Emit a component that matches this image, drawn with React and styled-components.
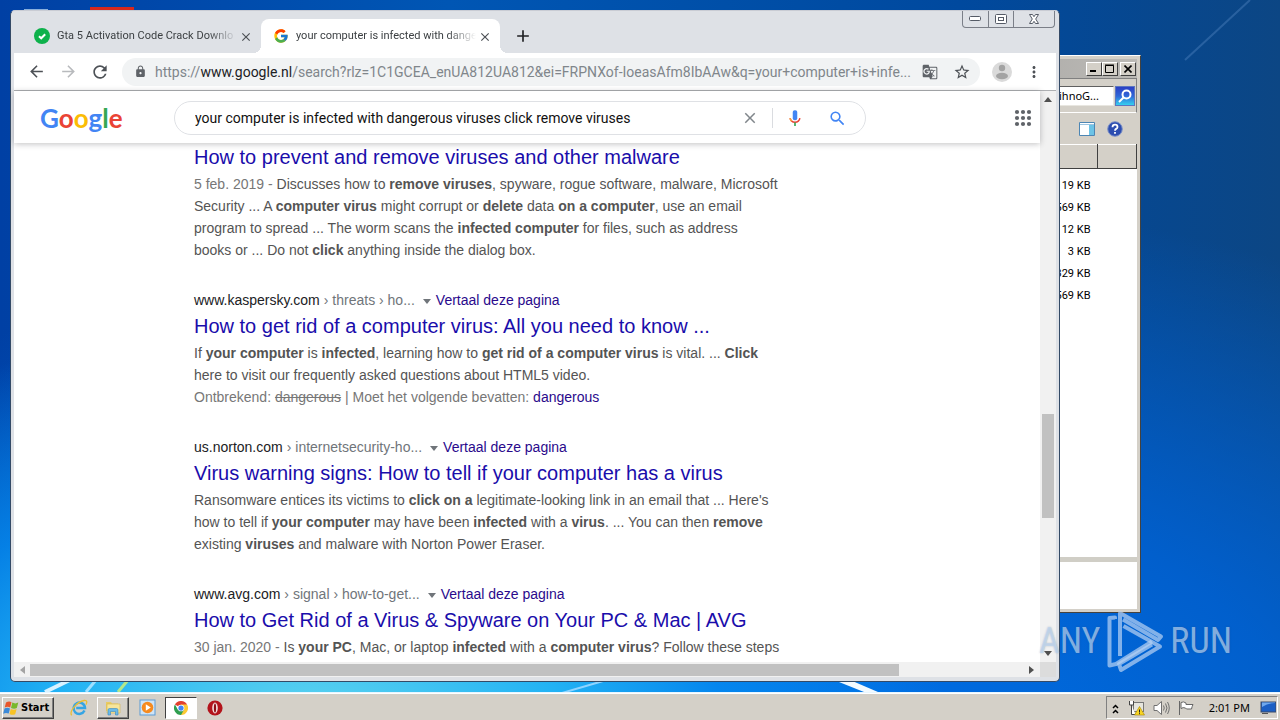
import React from "react";
import styled, { createGlobalStyle } from "styled-components";
import { FcGoogle } from "react-icons/fc";
import {
  MdArrowBack,
  MdArrowForward,
  MdClose,
  MdAdd,
  MdGTranslate,
  MdLock,
  MdMoreVert,
  MdRefresh,
  MdSearch,
  MdStarBorder,
} from "react-icons/md";

const uiFont = `Roboto, "Noto Sans", sans-serif`;
const classicFont = `"Noto Sans", "DejaVu Sans", sans-serif`;
const pageFont = `"Liberation Sans", Arial, sans-serif`;

const GlobalStyle = createGlobalStyle`
  * { box-sizing: border-box; }
  body { margin: 0; font-family: ${uiFont}; }
  button { padding: 0; border: 0; background: none; font: inherit; color: inherit; cursor: pointer; }
  input { padding: 0; border: 0; background: none; outline: 0; min-width: 0; }
  svg { display: block; flex: none; }
`;

/* ---------- desktop ---------- */

const Desktop = styled.div`
  position: relative;
  display: flex;
  flex-direction: column;
  height: 100vh;
  min-height: 480px;
  overflow: hidden;
  background: #0050b4;
`;

const Workspace = styled.main`
  position: relative;
  flex: 1;
  background:
    radial-gradient(ellipse 640px 420px at 24% 106%, #62d6ee 0%, #22b2f4 40%, rgba(6, 140, 240, 0.8) 65%, rgba(0, 110, 225, 0) 100%),
    radial-gradient(ellipse 1100px 560px at 58% 108%, #0072ea 0%, rgba(0, 98, 212, 0.9) 50%, rgba(0, 80, 180, 0) 100%),
    linear-gradient(90deg, #0040a4 0%, #0056b4 35%, #00499e 75%, #0c4684 100%);
`;

const Wallpaper = styled.svg`
  position: absolute;
  inset: 0;
  width: 100%;
  height: 100%;
`;

/* ---------- file explorer window ---------- */

const Explorer = styled.section`
  position: absolute;
  top: 55px;
  right: 139px;
  bottom: 79px;
  width: 520px;
  display: flex;
  flex-direction: column;
  padding: 3px;
  border: 1px solid;
  border-color: #fff #45423e #45423e #fff;
  background: #d4d0c8;
  font-size: 11px;
  color: #000;
`;

const ExplorerTitle = styled.header`
  display: flex;
  justify-content: flex-end;
  align-items: center;
  height: 19px;
  padding-right: 1px;
  background: linear-gradient(90deg, #808080, #bcbab6);
`;

const ClassicButton = styled.button`
  display: grid;
  place-items: center;
  width: 16px;
  height: 14px;
  margin-left: ${(p) => (p.$apart ? "2px" : "0")};
  background: #d4d0c8;
  border: 1px solid;
  border-color: #fff #404040 #404040 #fff;
`;

const ExplorerAddress = styled.div`
  display: flex;
  align-items: center;
  justify-content: flex-end;
  height: 35px;
  border: 1px solid #808080;
  border-width: 1px 1px 0 0;
  border-bottom: 1px solid #fff;
`;

const ExplorerSearch = styled.input`
  width: 74px;
  height: 20px;
  background: #fff;
  border: 1px solid;
  border-color: #606060 #e8e6e0 #e8e6e0 #606060;
  padding-left: 18px;
  font: 11px ${classicFont};
`;

const FindButton = styled.button`
  display: grid;
  place-items: center;
  width: 20px;
  height: 20px;
  margin: 0 1px;
  border: 1px solid #5b76c0;
  background: linear-gradient(180deg, #2b3fc4, #2f66d8 50%, #35d0f0);
`;

const ExplorerTools = styled.div`
  display: flex;
  align-items: center;
  justify-content: flex-end;
  gap: 12px;
  height: 31px;
  padding-right: 14px;
`;

const FileList = styled.div`
  flex: 1;
  background: #fff;
`;

const FileTable = styled.table`
  width: 100%;
  border-collapse: collapse;
  table-layout: fixed;
  th {
    height: 24px;
    background: #d4d0c8;
    border: 1px solid;
    border-color: #fff #404040 #404040 #fff;
  }
  td {
    height: 22px;
    padding: 0 7px 0 0;
    text-align: right;
  }
  tbody::before {
    content: "";
    display: block;
    height: 5px;
  }
`;

const SizeColumn = styled.col`
  width: ${(p) => p.$width};
`;

const DetailsPane = styled.footer`
  height: 52px;
  border-top: 5px solid #d0cec6;
  background: #fff;
`;

/* ---------- browser window ---------- */

const Browser = styled.section`
  position: absolute;
  top: 10px;
  right: 220px;
  bottom: 10px;
  left: 10px;
  display: flex;
  flex-direction: column;
  padding: 0 3px 4px;
  border: 1px solid #344a66;
  border-top-color: #c9ccd4;
  border-radius: 5px;
  background: #dee1e6;
  overflow: hidden;
`;

const TabStrip = styled.div`
  display: flex;
  align-items: flex-end;
  height: 42px;
  padding-left: 8px;
`;

const Tab = styled.div`
  position: relative;
  display: flex;
  align-items: center;
  width: 239px;
  height: 34px;
  padding: 0 10px 0 12px;
  border-radius: 8px 8px 0 0;
  background: ${(p) => (p.$active ? "#fff" : "transparent")};
  &::before,
  &::after {
    content: "";
    display: ${(p) => (p.$active ? "block" : "none")};
    position: absolute;
    bottom: 0;
    width: 8px;
    height: 8px;
  }
  &::before {
    left: -8px;
    background: radial-gradient(circle at 0 0, transparent 8px, #fff 8px);
  }
  &::after {
    right: -8px;
    background: radial-gradient(circle at 100% 0, transparent 8px, #fff 8px);
  }
`;

const TabTitle = styled.span`
  flex: 1;
  margin: 0 2px 0 7px;
  overflow: hidden;
  white-space: nowrap;
  font-size: 11px;
  line-height: 16px;
  color: #3c4043;
  mask-image: linear-gradient(90deg, #000 84%, transparent);
`;

const IconButton = styled.button`
  display: grid;
  place-items: center;
  width: ${(p) => p.$size}px;
  height: ${(p) => p.$size}px;
  color: ${(p) => p.$color || "#4d5156"};
`;

const NewTab = styled(IconButton)`
  margin: 0 0 2px 8px;
`;

const CaptionButtons = styled.div`
  display: flex;
  align-self: flex-start;
  margin-left: auto;
  margin-right: 1px;
  border: 1px solid #7b7f88;
  border-top: 0;
  border-radius: 0 0 4px 4px;
`;

const CaptionButton = styled.button`
  display: grid;
  place-items: center;
  width: ${(p) => (p.$wide ? 41 : 25)}px;
  height: 16px;
  & + & {
    border-left: 1px solid #7b7f88;
  }
`;

const Toolbar = styled.div`
  display: flex;
  align-items: center;
  height: 38px;
  padding: 0 6px;
  background: #fff;
  border-bottom: 1px solid #aeb0b3;
`;

const AddressBar = styled.label`
  display: flex;
  align-items: center;
  flex: 1;
  min-width: 0;
  height: 28px;
  margin: 0 6px;
  padding: 0 2px 0 12px;
  border-radius: 14px;
  background: #f1f3f4;
  font: 14px ${uiFont};
  color: #80868b;
`;

const Scheme = styled.span`
  margin-left: 8px;
`;

const Host = styled.span`
  color: #202124;
`;

const AddressInput = styled.input`
  flex: 1;
  font: inherit;
  color: inherit;
  text-overflow: ellipsis;
`;

const Viewport = styled.div`
  display: flex;
  flex: 1;
  min-height: 0;
`;

const Page = styled.div`
  display: flex;
  flex-direction: column;
  flex: 1;
  min-width: 0;
  background: #fff;
  font-family: ${pageFont};
`;

const PageHeader = styled.header`
  position: relative;
  z-index: 1;
  display: flex;
  align-items: center;
  flex: none;
  height: 52px;
  padding: 2px 8px 0 26px;
  background: #fff;
  box-shadow: 0 1px 6px rgba(32, 33, 36, 0.28);
`;

const GoogleLogo = styled.a`
  width: 134px;
  font-family: Lato, sans-serif;
  font-size: 26px;
  line-height: 34px;
  font-weight: 700;
  text-decoration: none;
`;

const LogoLetter = styled.span`
  color: ${(p) => p.$color};
`;

const SearchBox = styled.form`
  display: flex;
  align-items: center;
  flex: 0 1 692px;
  height: 34px;
  padding: 0 12px 0 20px;
  border: 1px solid #dfe1e5;
  border-radius: 17px;
`;

const SearchInput = styled.input`
  flex: 1;
  font: 14px ${uiFont};
  color: #111;
`;

const Divider = styled.span`
  width: 1px;
  height: 20px;
  margin: 0 6px;
  background: #dadce0;
`;

const AppsButton = styled(IconButton)`
  margin-left: auto;
`;

const Results = styled.div`
  flex: 1;
  min-height: 0;
  padding-left: 180px;
  overflow: hidden;
`;

const ResultList = styled.div`
  display: flex;
  flex-direction: column;
  gap: 29px;
  max-width: 620px;
  margin-top: -2px;
`;

const Result = styled.article`
  white-space: nowrap;
`;

const Source = styled.div`
  display: flex;
  align-items: center;
  font-size: 14px;
  line-height: 20px;
  color: #70757a;
`;

const Domain = styled.cite`
  margin-right: 4px;
  font-style: normal;
  color: #202124;
`;

const MoreArrow = styled.button`
  margin: 2px 5px 0 8px;
  border: 4px solid transparent;
  border-top: 5px solid #70757a;
  border-bottom: 0;
`;

const VisitedLink = styled.a`
  color: #2a0a8c;
  text-decoration: none;
`;

const ResultTitle = styled.h3`
  margin: 0;
  font-size: 20px;
  line-height: 32px;
  font-weight: 400;
`;

const TitleLink = styled.a`
  color: #1a0dab;
  text-decoration: none;
`;

const Snippet = styled.p`
  margin: 0;
  font-size: 14px;
  line-height: 22px;
  color: #545454;
`;

const Muted = styled.span`
  color: #777;
`;

/* ---------- scroll bars ---------- */

const VerticalScroll = styled.div`
  display: flex;
  flex-direction: column;
  align-items: center;
  width: 16px;
  padding: 6px 0;
  background: #f1f1f1;
`;

const VerticalThumb = styled.div`
  width: 12px;
  height: 104px;
  background: #c1c1c1;
`;

const HorizontalScroll = styled.div`
  display: flex;
  align-items: center;
  height: 15px;
  padding: 0 6px;
  background: #f1f1f1;
  border-right: 16px solid #dcdcdc;
`;

const HorizontalThumb = styled.div`
  flex: 0 1 869px;
  height: 12px;
  background: #c1c1c1;
`;

const Spacer = styled.div`
  flex: ${(p) => p.$grow};
`;

const ScrollArrow = styled.button`
  width: 0;
  height: 0;
  border: 4px solid transparent;
  ${(p) => (p.$side === "up" || p.$side === "down" ? "border-top-width: 0; border-bottom-width: 0;" : "border-left-width: 0; border-right-width: 0;")}
  ${(p) => p.$side === "up" && "border-bottom: 5px solid #505050;"}
  ${(p) => p.$side === "down" && "border-top: 5px solid #505050;"}
  ${(p) => p.$side === "left" && "border-right: 5px solid #a3a3a3; margin-right: 5px;"}
  ${(p) => p.$side === "right" && "border-left: 5px solid #505050;"}
`;

/* ---------- task bar ---------- */

const Taskbar = styled.nav`
  position: relative;
  display: flex;
  align-items: center;
  height: 28px;
  padding: 2px 2px 0;
  background: #d4d0c8;
  border-top: 1px solid #e8f6ff;
  box-shadow: inset 0 1px 0 #fff;
`;

const StartButton = styled.button`
  display: flex;
  align-items: center;
  gap: 1px;
  width: 52px;
  height: 22px;
  margin-right: 9px;
  border: 1px solid;
  border-color: #fff #404040 #404040 #fff;
  box-shadow: inset -1px -1px 0 #808080;
  font: bold 11px "DejaVu Sans Condensed", ${classicFont};
  color: #000;
`;

const taskLook = {
  flat: "border-color: transparent;",
  open: "border-color: #fff #404040 #404040 #fff; box-shadow: inset -1px -1px 0 #808080;",
  pressed: "border-color: #404040 #fff #fff #404040; background: #fff;",
};

const TaskButton = styled.button`
  display: grid;
  place-items: center;
  width: 32px;
  height: 22px;
  margin-right: 2px;
  border: 1px solid;
  ${(p) => taskLook[p.$look]}
`;

const Tray = styled.div`
  display: flex;
  align-items: center;
  gap: 8px;
  height: 23px;
  margin-left: auto;
  padding: 0 1px 0 5px;
  border: 1px solid;
  border-color: #808080 #fff #fff #808080;
  font: 11px ${classicFont};
  color: #000;
`;

const Clock = styled.time`
  margin: 0 2px 0 7px;
`;

/* ---------- watermark ---------- */

const Watermark = styled.div`
  position: absolute;
  right: 48px;
  bottom: 47px;
  display: flex;
  align-items: center;
  gap: 6px;
  font: 36px "Liberation Sans Narrow", "Roboto Condensed", Roboto, sans-serif;
  line-height: 64px;
  color: rgba(190, 216, 244, 0.68);
  text-shadow: 0 0 2px rgba(60, 80, 110, 0.3);
  pointer-events: none;
`;

/* ---------- drawings ---------- */

const CheckBadge = () => (
  <svg width="16" height="16" viewBox="0 0 16 16">
    <circle cx="8" cy="8" r="8" fill="#0db14b" />
    <path d="M5 8.2 7.2 10.3 11.2 6.2" fill="none" stroke="#fff" strokeWidth="2" />
  </svg>
);

const Avatar = () => (
  <svg width="20" height="20" viewBox="0 0 20 20">
    <circle cx="10" cy="10" r="10" fill="#dadada" />
    <circle cx="10" cy="6" r="3.2" fill="#a3a3a3" />
    <ellipse cx="10" cy="14" rx="6" ry="3.2" fill="#a3a3a3" />
  </svg>
);

const Mic = () => (
  <svg width="18" height="18" viewBox="0 0 24 24">
    <rect x="9" y="1.5" width="6" height="13.5" rx="2.6" fill="#4285f4" />
    <path d="M5.5 12.2a6.6 6.6 0 0 0 13 0" fill="none" stroke="#ea4335" strokeWidth="2" />
    <path d="M5.5 12.2a6.6 6.6 0 0 0 2 4" fill="none" stroke="#f4a340" strokeWidth="2" />
    <path d="M12 18v4.5" stroke="#34a853" strokeWidth="2.2" />
  </svg>
);

const Apps = () => (
  <svg width="18" height="18" viewBox="0 0 18 18" fill="#5f6368">
    {[3, 9, 15].map((y) => [3, 9, 15].map((x) => <circle key={`${x}-${y}`} cx={x} cy={y} r="2.1" />))}
  </svg>
);

const WindowsFlag = () => (
  <svg width="17" height="16" viewBox="0 0 17 16">
    <path d="M3 2.5q3-2 5.500-.3L7.200 7.500Q4.500 6 1.700 7.600Z" fill="#e8562a" />
    <path d="M9.300 2.600q3 1.600 6 0L13.800 8Q11 9.400 8 7.900Z" fill="#79b82b" />
    <path d="M1.500 8.500q2.700-1.600 5.500-.1L5.700 13.600Q3 12.200.2 13.700Z" fill="#3b8ad8" />
    <path d="M7.800 8.900q3 1.500 5.800 0L12.200 14.200Q9.400 15.600 6.500 14Z" fill="#f7c325" />
  </svg>
);

const ExplorerE = () => (
  <svg width="18" height="18" viewBox="0 0 18 18">
    <path d="M14.500 11.600A5.700 5.700 0 1 1 15 8.900H6.200" fill="none" stroke="#35a5e4" strokeWidth="2.500" />
    <path d="M1.600 16.300C-1 12.500 7 2.600 14.200 1.500c3.200-.4 3 2 1.700 4.200" fill="none" stroke="#e9bd33" strokeWidth="1.300" />
  </svg>
);

const FolderIcon = () => (
  <svg width="18" height="18" viewBox="0 0 18 18">
    <path d="M2 3h5l1 1.500h6V12H2z" fill="#e9cb62" />
    <path d="M3 5h13v9H3z" fill="#f7e59a" stroke="#d6b64d" strokeWidth=".6" />
    <path d="M4 16v-5q0-1.500 1.500-1.500h7Q14 9.500 14 11v5h-2.500v-3.500h-5V16z" fill="#6bbbe8" stroke="#3b88bd" strokeWidth=".6" />
  </svg>
);

const MediaPlayer = () => (
  <svg width="17" height="17" viewBox="0 0 17 17">
    <rect x="1" y="1" width="15" height="15" fill="#cfe4f6" stroke="#5b9bd5" />
    <circle cx="8.500" cy="8.500" r="5.800" fill="#f58a1f" />
    <path d="M6.800 5.300v6.400l5-3.200z" fill="#fff" />
  </svg>
);

const ChromeIcon = () => (
  <svg width="14" height="14" viewBox="0 0 48 48">
    <path d="M24 24 3.200 12A24 24 0 0 1 44.800 12z" fill="#e2402f" />
    <path d="M24 24V12h20.800A24 24 0 0 1 24 48z" fill="#fcc934" />
    <path d="M24 24 34.400 30 24 48A24 24 0 0 1 3.200 12L13.600 30z" fill="#2f9e4f" />
    <circle cx="24" cy="24" r="11.500" fill="#fff" />
    <circle cx="24" cy="24" r="9" fill="#4285f4" />
  </svg>
);

const OperaIcon = () => (
  <svg width="16" height="16" viewBox="0 0 16 16">
    <circle cx="8" cy="8" r="7.600" fill="#b3131b" />
    <ellipse cx="8" cy="8" rx="2.800" ry="5.400" fill="#f4dcdc" />
    <ellipse cx="8" cy="8" rx="1.100" ry="4.500" fill="#8c0c14" />
  </svg>
);

const NetworkIcon = () => (
  <svg width="17" height="16" viewBox="0 0 17 16">
    <rect x="5.500" y="2.500" width="10" height="9" fill="#e6e6de" stroke="#777" />
    <path d="M1.500 1v4h4V1M3.500 5v9.500h4" fill="#fff" stroke="#444" />
    <path d="M11.500 6.500 16.500 15h-10z" fill="#f8d423" stroke="#a48300" strokeWidth=".6" />
    <path d="M11.500 9.500v3M11.500 13.200v1" stroke="#222" />
  </svg>
);

const SpeakerIcon = () => (
  <svg width="17" height="16" viewBox="0 0 17 16" fill="none" stroke="#707070">
    <path d="M1 5.500h3L8.500 1.500v13L4 10.500H1z" fill="#fff" />
    <path d="M10.500 5.500q1.500 2.500 0 5M12.500 3.500q3 4.500 0 9M14.500 2q3.500 6 0 12" />
  </svg>
);

const FlagIcon = () => (
  <svg width="16" height="16" viewBox="0 0 16 16" fill="#fff" stroke="#666">
    <path d="M1.500 1v14" />
    <path d="M3 2.500q2.500-1.500 5 .5v1.500h7q-1 2-1.500 4.500H8.500L7.500 8Q5 7 3 8.500z" />
  </svg>
);

const MonitorIcon = () => (
  <svg width="16" height="14" viewBox="0 0 16 14">
    <rect x="1" y="1" width="15" height="10" fill="#1c5fc4" stroke="#3a4a68" />
    <path d="M2 6q6-4 13-4v-.500H2z" fill="#6fa8ee" />
    <path d="M2 12.500h6" stroke="#555" />
  </svg>
);

const PlayMark = () => (
  <svg width="58" height="64" viewBox="0 0 58 64" fill="none" stroke="rgba(180,208,242,.72)" strokeWidth="4" strokeLinejoin="round">
    <path d="M9 10V8.500L3.500 9V56.500L10 55 46 32.500" />
    <path d="M14 47V4L55 27.500 52 31 17 10.500" />
    <path d="M17.500 17 54 37.500 15 61 13 55 46 35.500" />
  </svg>
);

/* ---------- content ---------- */

const results = [
  {
    title: "How to prevent and remove viruses and other malware",
    lines: [
      <><Muted>5 feb. 2019 - </Muted>Discusses how to <b>remove viruses</b>, spyware, rogue software, malware, Microsoft</>,
      <>Security ... A <b>computer virus</b> might corrupt or <b>delete</b> data <b>on a computer</b>, use an email</>,
      <>program to spread ... The worm scans the <b>infected computer</b> for files, such as address</>,
      <>books or ... Do not <b>click</b> anything inside the dialog box.</>,
    ],
  },
  {
    domain: "www.kaspersky.com",
    path: "› threats › ho...",
    title: "How to get rid of a computer virus: All you need to know ...",
    lines: [
      <>If <b>your computer</b> is <b>infected</b>, learning how to <b>get rid of a computer virus</b> is vital. ... <b>Click</b></>,
      <>here to visit our frequently asked questions about HTML5 video.</>,
      <Muted>Ontbrekend: <s>dangerous</s> | Moet het volgende bevatten: <VisitedLink href="#dangerous">dangerous</VisitedLink></Muted>,
    ],
  },
  {
    domain: "us.norton.com",
    path: "› internetsecurity-ho...",
    title: "Virus warning signs: How to tell if your computer has a virus",
    lines: [
      <>Ransomware entices its victims to <b>click on a</b> legitimate-looking link in an email that ... Here's</>,
      <>how to tell if <b>your computer</b> may have been <b>infected</b> with a <b>virus</b>. ... You can then <b>remove</b></>,
      <>existing <b>viruses</b> and malware with Norton Power Eraser.</>,
    ],
  },
  {
    domain: "www.avg.com",
    path: "› signal › how-to-get...",
    title: "How to Get Rid of a Virus & Spyware on Your PC & Mac | AVG",
    lines: [
      <><Muted>30 jan. 2020 - </Muted>Is <b>your PC</b>, Mac, or laptop <b>infected</b> with a <b>computer virus</b>? Follow these steps</>,
    ],
  },
];

const fileSizes = ["119 KB", "569 KB", "12 KB", "3 KB", "329 KB", "569 KB"];

const logoLetters = [
  ["G", "#4285f4"],
  ["o", "#ea4335"],
  ["o", "#fbbc05"],
  ["g", "#4285f4"],
  ["l", "#34a853"],
  ["e", "#ea4335"],
];

function ExplorerWindow() {
  return (
    <Explorer aria-label="Files">
      <ExplorerTitle>
        <ClassicButton aria-label="Minimize"><svg width="10" height="9"><path d="M1 7h6" stroke="#000" strokeWidth="2" /></svg></ClassicButton>
        <ClassicButton aria-label="Maximize"><svg width="10" height="10"><path d="M.5 1.500h8v7h-8zM0 1h9" fill="none" stroke="#000" /></svg></ClassicButton>
        <ClassicButton aria-label="Close" $apart><svg width="8" height="8"><path d="M.5.5l7 7M7.500.5l-7 7" stroke="#000" strokeWidth="1.600" /></svg></ClassicButton>
      </ExplorerTitle>
      <ExplorerAddress>
        <ExplorerSearch aria-label="Search folder" defaultValue="ihnoG..." />
        <FindButton aria-label="Find">
          <svg width="16" height="16" fill="none" stroke="#fff" strokeWidth="2"><circle cx="9.500" cy="6.500" r="4" /><path d="M6.500 9.500 2 14" /></svg>
        </FindButton>
      </ExplorerAddress>
      <ExplorerTools>
        <IconButton $size={16} aria-label="Preview pane">
          <svg width="16" height="14"><path d="M.5.500h15v13H.5z" fill="#fff" stroke="#4d86b4" /><path d="M10 3h5v10h-5z" fill="#6cc3e6" /><path d="M1 2.500h14" stroke="#9cc4e0" /></svg>
        </IconButton>
        <IconButton $size={16} aria-label="Help">
          <svg width="16" height="16" viewBox="0 0 16 16"><circle cx="8" cy="8" r="7.300" fill="#2c4db0" stroke="#7f93c8" /><path d="M5.500 6.200q0-2.500 2.500-2.500t2.500 2.200q0 1.200-1.400 2Q8 8.500 8 9.700M8 11v1.800" fill="none" stroke="#fff" strokeWidth="1.800" /></svg>
        </IconButton>
      </ExplorerTools>
      <FileList>
        <FileTable>
          <colgroup>
            <SizeColumn $width="auto" />
            <SizeColumn $width="39px" />
          </colgroup>
          <thead><tr><th aria-label="Size" /><th aria-label="Other" /></tr></thead>
          <tbody>
            {fileSizes.map((size, i) => (
              <tr key={i}><td>{size}</td><td /></tr>
            ))}
          </tbody>
        </FileTable>
      </FileList>
      <DetailsPane />
    </Explorer>
  );
}

function ResultItem({ item }) {
  return (
    <Result>
      {item.domain && (
        <Source>
          <Domain>{item.domain}</Domain>
          {item.path}
          <MoreArrow aria-label="More options" />
          <VisitedLink href="#translate">Vertaal deze pagina</VisitedLink>
        </Source>
      )}
      <ResultTitle><TitleLink href="#result">{item.title}</TitleLink></ResultTitle>
      <Snippet>
        {item.lines.map((line, i) => (
          <React.Fragment key={i}>{i > 0 && <br />}{line}</React.Fragment>
        ))}
      </Snippet>
    </Result>
  );
}

function BrowserWindow() {
  return (
    <Browser aria-label="Browser">
      <TabStrip>
        <Tab>
          <CheckBadge />
          <TabTitle>Gta 5 Activation Code Crack Downlo</TabTitle>
          <IconButton $size={12} aria-label="Close tab"><MdClose size={14} /></IconButton>
        </Tab>
        <Tab $active>
          <FcGoogle size={16} />
          <TabTitle>your computer is infected with dange</TabTitle>
          <IconButton $size={12} aria-label="Close tab"><MdClose size={14} /></IconButton>
        </Tab>
        <NewTab $size={30} $color="#202124" aria-label="New tab"><MdAdd size={20} /></NewTab>
        <CaptionButtons>
          <CaptionButton aria-label="Minimize"><svg width="13" height="6"><rect x=".5" y=".5" width="11" height="4" rx="1" fill="#fff" stroke="#555b66" /></svg></CaptionButton>
          <CaptionButton aria-label="Maximize"><svg width="12" height="10" fill="#fff" stroke="#555b66"><rect x=".5" y=".5" width="11" height="9" rx="1" /><rect x="3.500" y="3.500" width="5" height="3" /></svg></CaptionButton>
          <CaptionButton $wide aria-label="Close"><svg width="12" height="10"><path d="M1.500.5h3L6 2.700 7.500.5h3L7.700 5l2.800 4.500h-3L6 7.300 4.500 9.500h-3L4.300 5z" fill="#fff" stroke="#555b66" /></svg></CaptionButton>
        </CaptionButtons>
      </TabStrip>
      <Toolbar>
        <IconButton $size={32} aria-label="Back"><MdArrowBack size={19} /></IconButton>
        <IconButton $size={32} $color="#b8babd" aria-label="Forward"><MdArrowForward size={19} /></IconButton>
        <IconButton $size={32} aria-label="Reload"><MdRefresh size={20} /></IconButton>
        <AddressBar>
          <MdLock size={13} color="#5f6368" />
          <Scheme>https://</Scheme>
          <Host>www.google.nl</Host>
          <AddressInput
            aria-label="Address"
            defaultValue="/search?rlz=1C1GCEA_enUA812UA812&ei=FRPNXof-IoeasAfm8IbAAw&q=your+computer+is+infe..."
          />
          <IconButton $size={32} $color="#5f6368" aria-label="Translate"><MdGTranslate size={16} /></IconButton>
          <IconButton $size={32} $color="#4d5156" aria-label="Bookmark"><MdStarBorder size={18} /></IconButton>
        </AddressBar>
        <IconButton $size={32} aria-label="Profile"><Avatar /></IconButton>
        <IconButton $size={32} aria-label="Menu"><MdMoreVert size={18} /></IconButton>
      </Toolbar>
      <Viewport>
        <Page>
          <PageHeader>
            <GoogleLogo href="#home" aria-label="Google">
              {logoLetters.map(([letter, color], i) => (
                <LogoLetter key={i} $color={color}>{letter}</LogoLetter>
              ))}
            </GoogleLogo>
            <SearchBox onSubmit={(e) => e.preventDefault()}>
              <SearchInput aria-label="Search" defaultValue="your computer is infected with dangerous viruses click remove viruses" />
              <IconButton type="button" $size={32} $color="#80868b" aria-label="Clear"><MdClose size={18} /></IconButton>
              <Divider />
              <IconButton type="button" $size={32} aria-label="Voice search"><Mic /></IconButton>
              <Spacer $grow="0 0 10px" />
              <IconButton $size={32} $color="#4285f4" aria-label="Search"><MdSearch size={19} /></IconButton>
            </SearchBox>
            <AppsButton $size={18} aria-label="Apps"><Apps /></AppsButton>
          </PageHeader>
          <Results>
            <ResultList>
              {results.map((item) => <ResultItem key={item.title} item={item} />)}
            </ResultList>
          </Results>
        </Page>
        <VerticalScroll>
          <ScrollArrow $side="up" aria-label="Scroll up" />
          <Spacer $grow={70} />
          <VerticalThumb />
          <Spacer $grow={30} />
          <ScrollArrow $side="down" aria-label="Scroll down" />
        </VerticalScroll>
      </Viewport>
      <HorizontalScroll>
        <ScrollArrow $side="left" aria-label="Scroll left" />
        <HorizontalThumb />
        <Spacer $grow={1} />
        <ScrollArrow $side="right" aria-label="Scroll right" />
      </HorizontalScroll>
    </Browser>
  );
}

export default function App() {
  return (
    <Desktop>
      <GlobalStyle />
      <Workspace>
        <Wallpaper viewBox="0 0 1280 692" preserveAspectRatio="none" fill="none">
          <path d="M1250 0 1185 60" stroke="#6fa0d8" strokeOpacity=".3" strokeWidth="2" />
          <path d="M45 692 78 676" stroke="#d8f2ff" strokeWidth="4" />
          <path d="M86 692 96 680" stroke="#9fe0ff" strokeWidth="3" />
          <path d="M118 692 128 680" stroke="#b4e88a" strokeWidth="3" />
          <path d="M562 693 610 679" stroke="#8fd4ff" strokeWidth="2" />
          <path d="M834 680h16l28 12h-14z" fill="#f2faff" />
          <path d="M90 8.500h44" stroke="#d8281c" strokeWidth="3" />
          <path d="M24 9.500h24" stroke="#8ab0dc" strokeWidth="1" />
        </Wallpaper>
        <ExplorerWindow />
        <BrowserWindow />
      </Workspace>
      <Taskbar aria-label="Task bar">
        <StartButton><WindowsFlag />Start</StartButton>
        <TaskButton $look="flat" aria-label="Internet Explorer"><ExplorerE /></TaskButton>
        <TaskButton $look="open" aria-label="Windows Explorer"><FolderIcon /></TaskButton>
        <TaskButton $look="flat" aria-label="Media Player"><MediaPlayer /></TaskButton>
        <TaskButton $look="pressed" aria-label="Chrome"><ChromeIcon /></TaskButton>
        <TaskButton $look="flat" aria-label="Opera"><OperaIcon /></TaskButton>
        <Tray>
          <IconButton $size={8} $color="#000" aria-label="Show hidden icons">
            <svg width="7" height="10" fill="none" stroke="#000" strokeWidth="1.500"><path d="M1 4l2.500-2.500L6 4M1 9l2.500-2.500L6 9" /></svg>
          </IconButton>
          <NetworkIcon />
          <SpeakerIcon />
          <FlagIcon />
          <Clock>2:01 PM</Clock>
          <MonitorIcon />
        </Tray>
      </Taskbar>
      <Watermark>
        <span>ANY</span>
        <PlayMark />
        <span>RUN</span>
      </Watermark>
    </Desktop>
  );
}
